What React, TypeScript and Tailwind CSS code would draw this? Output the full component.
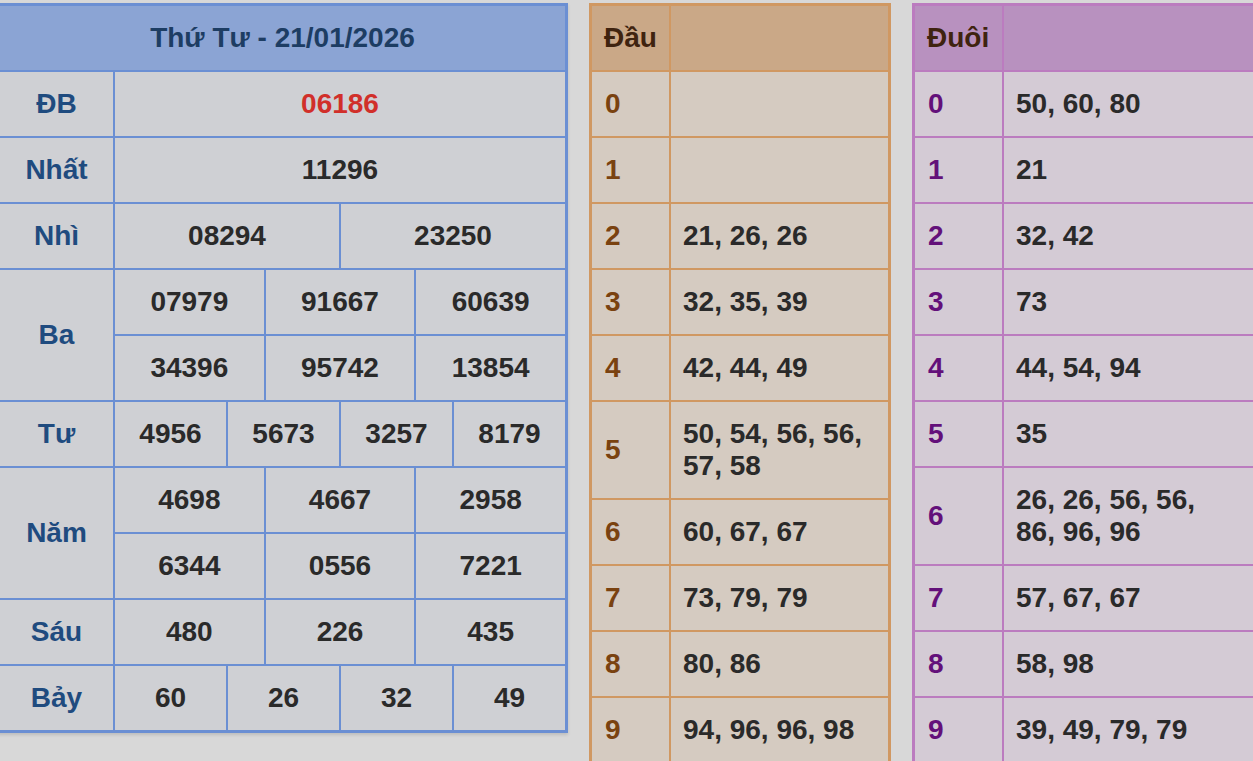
import React from "react";

const font = { fontFamily: '"Liberation Sans", Arial, Helvetica, sans-serif' };

type Row = { label: string; values: string[]; red?: boolean };

const prizes: Row[][] = [
    [{ label: "ĐB", values: ["06186"], red: true }],
    [{ label: "Nhất", values: ["11296"] }],
    [{ label: "Nhì", values: ["08294", "23250"] }],
    [{ label: "Ba", values: ["07979", "91667", "60639"] }, { label: "Ba", values: ["34396", "95742", "13854"] }],
    [{ label: "Tư", values: ["4956", "5673", "3257", "8179"] }],
    [{ label: "Năm", values: ["4698", "4667", "2958"] }, { label: "Năm", values: ["6344", "0556", "7221"] }],
    [{ label: "Sáu", values: ["480", "226", "435"] }],
    [{ label: "Bảy", values: ["60", "26", "32", "49"] }],
];

const spanClass: Record<number, string> = {
    1: "col-span-12",
    2: "col-span-6",
    3: "col-span-4",
    4: "col-span-3",
};

const dau = ["", "", "21, 26, 26", "32, 35, 39", "42, 44, 49", "50, 54, 56, 56, 57, 58", "60, 67, 67", "73, 79, 79", "80, 86", "94, 96, 96, 98"];
const duoi = ["50, 60, 80", "21", "32, 42", "73", "44, 54, 94", "35", "26, 26, 56, 56, 86, 96, 96", "57, 67, 67", "58, 98", "39, 49, 79, 79"];

function ResultTable() {
    return (
        <div className="-ml-[3px] w-[571px] shrink-0 border-[3px] border-[#6b8fd3] bg-[#6b8fd3] shadow-[0_2px_3px_rgba(0,0,0,0.12)]">
            <div className="grid grid-cols-[113px_repeat(12,minmax(0,1fr))] auto-rows-[64px] gap-[2px]">
                {/* Header */}
                <div className="col-span-13 flex items-center justify-center bg-[#8ba4d4] text-[28px] font-bold text-[#1d3d63]">
                    Thứ Tư - 21/01/2026
                </div>
                {prizes.map((group) => (
                    <React.Fragment key={group[0].label}>
                        <div className={`${group.length === 2 ? "row-span-2" : ""} flex items-center justify-center bg-[#cfd0d4] text-[28px] font-bold text-[#1f4b7f]`}>
                            {group[0].label}
                        </div>
                        {group.map((row, ri) =>
                            row.values.map((v, i) => (
                                <div key={`${ri}-${i}`}
                                    className={`${spanClass[row.values.length]} flex items-center justify-center bg-[#cfd0d4] text-[28px] font-bold ${row.red ? "text-[#d12f2a]" : "text-[#2a2a2a]"}`}>
                                    {v}
                                </div>
                            ))
                        )}
                    </React.Fragment>
                ))}
            </div>
        </div>
    );
}

interface LotoProps {
    title: string;
    items: string[];
    width: string;
    cols: string;
    border: string;
    head: string;
    cell: string;
    digit: string;
    padRight: string;
}

function LotoTable({ title, items, width, cols, border, head, cell, digit, padRight }: LotoProps) {
    return (
        <div className={`${width} ${border} shrink-0 border-[3px]`}>
            <div className={`grid ${cols} auto-rows-[minmax(64px,auto)] gap-[2px]`}>
                <div className={`${head} flex items-center px-[12px] text-[28px] font-bold text-[#3f230f]`}>{title}</div>
                <div className={head} />
                {items.map((v, i) => (
                    <React.Fragment key={i}>
                        <div className={`${cell} ${digit} flex items-center px-[13px] py-[16px] text-[28px] leading-[32px] font-bold`}>{i}</div>
                        <div className={`${cell} ${padRight} flex items-center pl-[12px] py-[16px] text-[28px] leading-[32px] font-bold text-[#2a2a2a]`}>{v}</div>
                    </React.Fragment>
                ))}
            </div>
        </div>
    );
}

export default function App() {
    return (
        <div style={font} className="h-[761px] w-full overflow-hidden bg-[#d8d8d8] pt-[3px]">
            <div className="flex items-start gap-[21px]">
                <ResultTable />
                <LotoTable title="Đầu" items={dau} width="w-[302px]" cols="grid-cols-[77px_1fr]" padRight="pr-[12px]"
                    border="border-[#d09862] bg-[#d09862]" head="bg-[#caa887]" cell="bg-[#d5cbc1]" digit="text-[#7a4210]" />
                <LotoTable title="Đuôi" items={duoi} width="w-[350px]" cols="grid-cols-[87px_1fr]" padRight="pr-[28px]"
                    border="border-[#bb7cbf] bg-[#bb7cbf]" head="bg-[#b891bf]" cell="bg-[#d4cbd5]" digit="text-[#63107a]" />
            </div>
        </div>
    );
}
